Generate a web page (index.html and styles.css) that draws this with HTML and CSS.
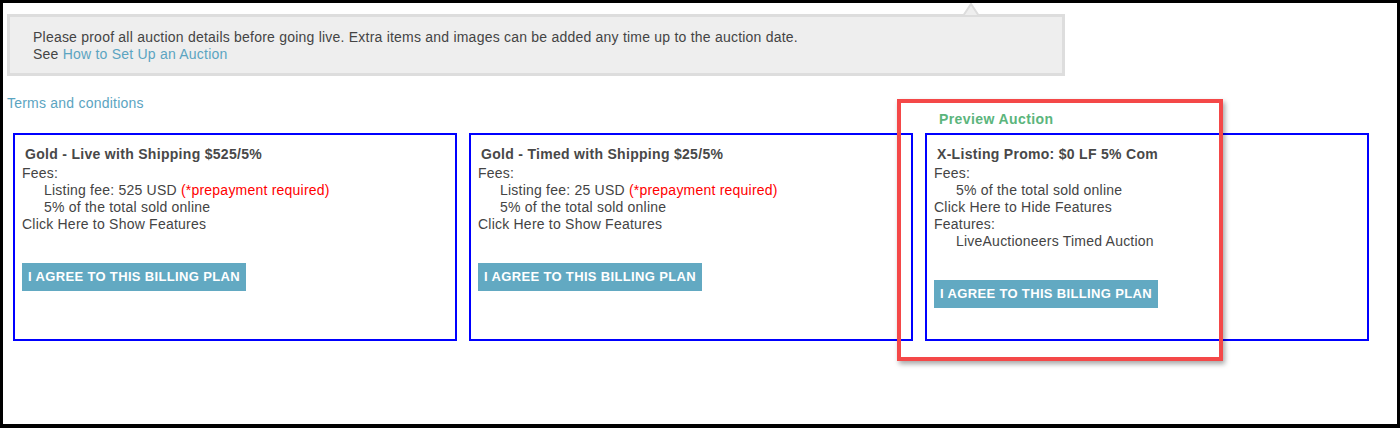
FILE: index.html
```html
<!DOCTYPE html>
<html>
<head>
<meta charset="utf-8">
<link rel="stylesheet" href="styles.css">
</head>
<body>
<div class="frame">
  <div class="notice">
    <svg class="caret" width="18" height="13" viewBox="0 0 18 13"><polygon points="1,13 9,1 17,13" fill="#eeeeee" stroke="#dddddd" stroke-width="2"/></svg>
    <div>Please proof all auction details before going live. Extra items and images can be added any time up to the auction date.</div>
    <div>See <a class="link">How to Set Up an Auction</a></div>
  </div>
  <div class="terms"><a class="link">Terms and conditions</a></div>
  <div class="plans">
    <div class="col">
      <div class="col-head"></div>
      <div class="card">
        <div class="title">Gold - Live with Shipping $525/5%</div>
        <div>Fees:</div>
        <div class="indent">Listing fee: 525 USD <span class="req">(*prepayment required)</span></div>
        <div class="indent">5% of the total sold online</div>
        <div>Click Here to Show Features</div>
        <div class="btn">I AGREE TO THIS BILLING PLAN</div>
      </div>
    </div>
    <div class="col">
      <div class="col-head"></div>
      <div class="card">
        <div class="title">Gold - Timed with Shipping $25/5%</div>
        <div>Fees:</div>
        <div class="indent">Listing fee: 25 USD <span class="req">(*prepayment required)</span></div>
        <div class="indent">5% of the total sold online</div>
        <div>Click Here to Show Features</div>
        <div class="btn">I AGREE TO THIS BILLING PLAN</div>
      </div>
    </div>
    <div class="col">
      <div class="col-head"><span class="preview">Preview Auction</span></div>
      <div class="card">
        <div class="title">X-Listing Promo: $0 LF 5% Com</div>
        <div>Fees:</div>
        <div class="indent">5% of the total sold online</div>
        <div>Click Here to Hide Features</div>
        <div>Features:</div>
        <div class="indent">LiveAuctioneers Timed Auction</div>
        <div class="btn">I AGREE TO THIS BILLING PLAN</div>
      </div>
    </div>
  </div>
  <div class="highlight"></div>
</div>
</body>
</html>
```
FILE: styles.css
```css
html, body {
  margin: 0;
  padding: 0;
  background: #000;
}
.frame {
  position: relative;
  box-sizing: border-box;
  width: 1400px;
  height: 428px;
  border-style: solid;
  border-color: #000;
  border-width: 3px 3px 4px 3px;
  background: #fff;
  padding: 11px 0 0 4px;
  font-family: "Liberation Sans", Arial, sans-serif;
  font-size: 14px;
  letter-spacing: 0.22px;
  color: #444;
}
.link {
  color: #5ba4c1;
  text-decoration: none;
}
.notice {
  position: relative;
  box-sizing: border-box;
  width: 1058px;
  height: 62px;
  border: 3px solid #dddddd;
  background: #eeeeee;
  padding: 12px 23px 10px 23px;
  line-height: 17px;
  color: #444;
}
.caret {
  position: absolute;
  top: -14px;
  left: 952px;
}
.terms {
  margin-top: 19px;
  line-height: 17px;
}
.plans {
  display: flex;
  gap: 12px;
  margin-left: 6px;
}
.col {
  display: flex;
  flex-direction: column;
  width: 444px;
}
.col-head {
  height: 21px;
  line-height: 15px;
  padding-left: 14px;
}
.preview {
  color: #5bb57c;
  font-weight: bold;
  font-size: 14px;
  letter-spacing: 0.4px;
}
.card {
  box-sizing: border-box;
  height: 208px;
  border: 2px solid #0000ff;
  padding: 9px 7px 0 7px;
  line-height: 17px;
  color: #444;
}
.title {
  font-weight: bold;
  line-height: 20px;
  margin-bottom: 1px;
  padding-left: 3px;
  letter-spacing: 0.3px;
  color: #484848;
}
.indent {
  padding-left: 22px;
}
.req {
  color: #ff0000;
}
.btn {
  display: inline-block;
  margin-top: 30px;
  height: 28px;
  line-height: 28px;
  padding: 0 6px;
  background: #62a9c2;
  color: #fff;
  font-weight: bold;
  font-size: 13px;
  letter-spacing: 0.35px;
}
.highlight {
  position: absolute;
  left: 894px;
  top: 96px;
  width: 318px;
  height: 254px;
  border: 4px solid #f44848;
  box-shadow: 2px 3px 5px rgba(0, 0, 0, 0.35);
  pointer-events: none;
}
```
